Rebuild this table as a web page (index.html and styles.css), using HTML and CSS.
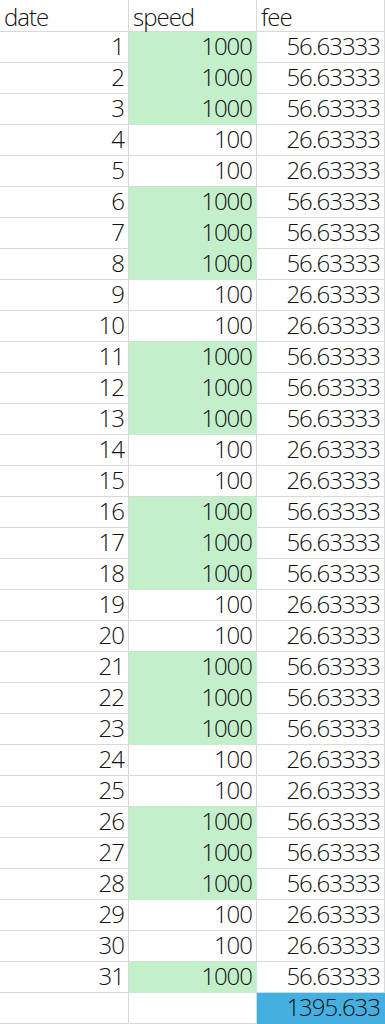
FILE: index.html
```html
<!DOCTYPE html>
<html>
<head>
<meta charset="utf-8">
<link rel="stylesheet" href="styles.css">
</head>
<body>
<div class="sheet">
  <div class="c hd">date</div><div class="c hd">speed</div><div class="c hd">fee</div>
  <div class="c num">1</div><div class="c num g">1000</div><div class="c num">56.63333</div>
  <div class="c num">2</div><div class="c num g">1000</div><div class="c num">56.63333</div>
  <div class="c num">3</div><div class="c num g">1000</div><div class="c num">56.63333</div>
  <div class="c num">4</div><div class="c num">100</div><div class="c num">26.63333</div>
  <div class="c num">5</div><div class="c num">100</div><div class="c num">26.63333</div>
  <div class="c num">6</div><div class="c num g">1000</div><div class="c num">56.63333</div>
  <div class="c num">7</div><div class="c num g">1000</div><div class="c num">56.63333</div>
  <div class="c num">8</div><div class="c num g">1000</div><div class="c num">56.63333</div>
  <div class="c num">9</div><div class="c num">100</div><div class="c num">26.63333</div>
  <div class="c num">10</div><div class="c num">100</div><div class="c num">26.63333</div>
  <div class="c num">11</div><div class="c num g">1000</div><div class="c num">56.63333</div>
  <div class="c num">12</div><div class="c num g">1000</div><div class="c num">56.63333</div>
  <div class="c num">13</div><div class="c num g">1000</div><div class="c num">56.63333</div>
  <div class="c num">14</div><div class="c num">100</div><div class="c num">26.63333</div>
  <div class="c num">15</div><div class="c num">100</div><div class="c num">26.63333</div>
  <div class="c num">16</div><div class="c num g">1000</div><div class="c num">56.63333</div>
  <div class="c num">17</div><div class="c num g">1000</div><div class="c num">56.63333</div>
  <div class="c num">18</div><div class="c num g">1000</div><div class="c num">56.63333</div>
  <div class="c num">19</div><div class="c num">100</div><div class="c num">26.63333</div>
  <div class="c num">20</div><div class="c num">100</div><div class="c num">26.63333</div>
  <div class="c num">21</div><div class="c num g">1000</div><div class="c num">56.63333</div>
  <div class="c num">22</div><div class="c num g">1000</div><div class="c num">56.63333</div>
  <div class="c num">23</div><div class="c num g">1000</div><div class="c num">56.63333</div>
  <div class="c num">24</div><div class="c num">100</div><div class="c num">26.63333</div>
  <div class="c num">25</div><div class="c num">100</div><div class="c num">26.63333</div>
  <div class="c num">26</div><div class="c num g">1000</div><div class="c num">56.63333</div>
  <div class="c num">27</div><div class="c num g">1000</div><div class="c num">56.63333</div>
  <div class="c num">28</div><div class="c num g">1000</div><div class="c num">56.63333</div>
  <div class="c num">29</div><div class="c num">100</div><div class="c num">26.63333</div>
  <div class="c num">30</div><div class="c num">100</div><div class="c num">26.63333</div>
  <div class="c num">31</div><div class="c num g">1000</div><div class="c num">56.63333</div>
  <div class="c num"></div><div class="c num"></div><div class="c num b">1395.633</div>
</div>
</body>
</html>
```

FILE: styles.css
```css
html, body {
  margin: 0;
  padding: 0;
  background: #ffffff;
  overflow: hidden;
}

.sheet {
  display: grid;
  grid-template-columns: 129px 128px 128px;
  grid-template-rows: 32px;
  grid-auto-rows: 31px;
  font-family: "Open Sans", "Noto Sans", sans-serif;
  font-size: 24px;
  font-weight: 300;
  letter-spacing: -1px;
  color: #111111;
}

.c {
  box-sizing: border-box;
  border-right: 1px solid #d9d9d9;
  border-bottom: 1px solid #d9d9d9;
  line-height: 27px;
  white-space: nowrap;
}

.hd {
  text-align: left;
  padding-left: 4px;
  padding-top: 3px;
}

.num {
  text-align: right;
  padding-right: 4px;
}

.g {
  background: #c3efca;
  border-right-color: #c3efca;
  border-bottom-color: #c3efca;
}

.b {
  background: #45afdf;
  border-right-color: #45afdf;
  border-bottom-color: #45afdf;
}
```
